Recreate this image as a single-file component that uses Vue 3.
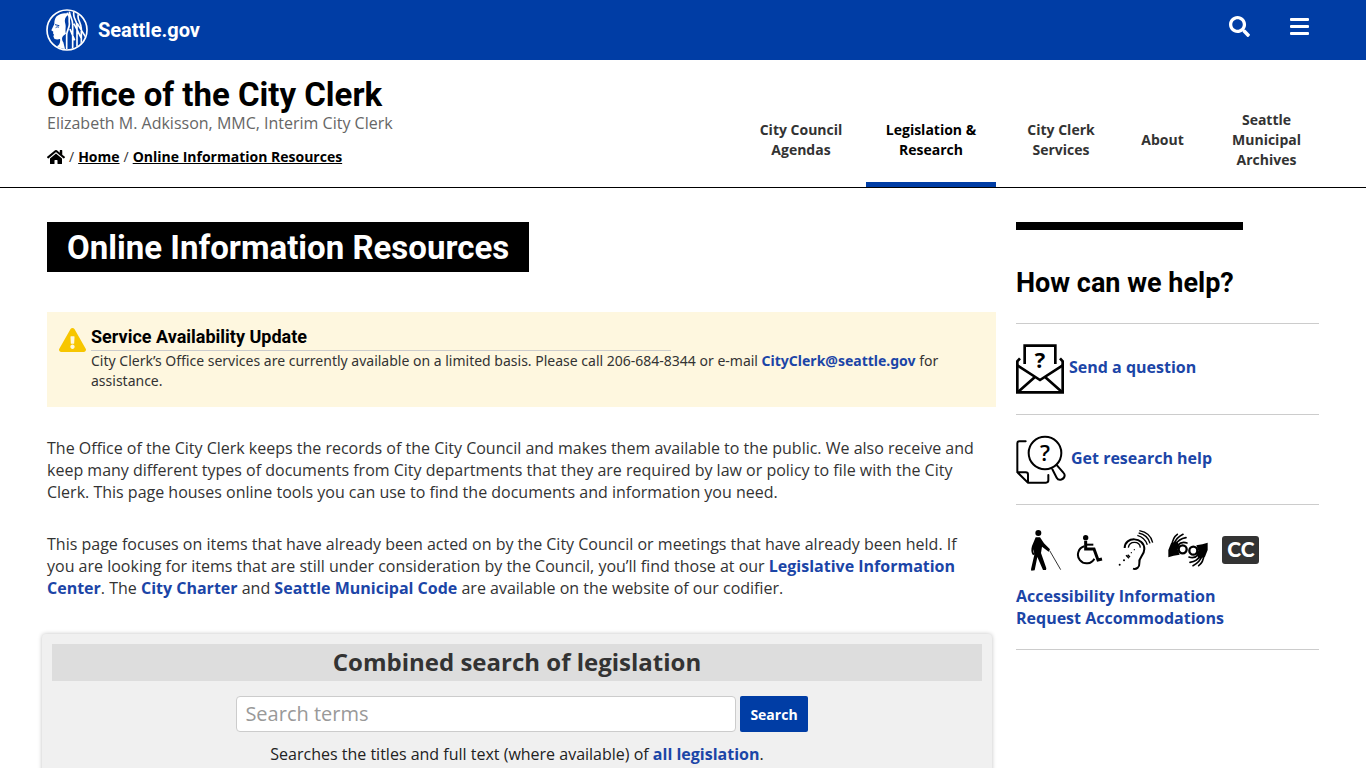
<template>
  <div class="page">
    <header>
      <div class="top-bar">
        <a class="brand" href="#">
          <svg class="brand-logo" viewBox="0 0 126 126" aria-hidden="true">
            <defs>
              <clipPath id="seal"><circle cx="63" cy="63" r="58" /></clipPath>
            </defs>
            <g clip-path="url(#seal)">
              <path fill="#fff" d="M32 22c12-9 26-12 38-6-12 6-16 16-12 28 3 12-2 20 2 30l-8 6c-6 6-4 14 0 20l6 24c-10-2-20-6-26-12 8-4 12-12 10-22-6 2-12 2-17-1l-3-7 2-5-3-4 1-5-6-4 9-19c0-8 1-16 7-23z" />
              <path class="logo-cut" d="M27 47l13 3M29 56c4-3 7-3 10-1" />
              <path class="logo-line" d="M62 12c12 6 6 18 8 30 2 14-8 22-8 36v46M70 8c2 16 10 22 10 38v78M84 8c-6 18 9 26 9 42v70M98 14c-9 14 10 28 8 48v44M84 44l22 44M94 44l26 42M72 60l14 34" />
            </g>
            <circle class="logo-ring" cx="63" cy="63" r="60" />
          </svg>
          <span>Seattle.gov</span>
        </a>
        <div class="top-actions">
          <button type="button" aria-label="Search Seattle.gov">
            <svg width="21" height="21" viewBox="0 0 512 512" fill="currentColor">
              <path d="M505 442.7L405.3 343c-4.5-4.5-10.6-7-17-7H372c27.6-35.3 44-79.7 44-128C416 93.1 322.9 0 208 0S0 93.1 0 208s93.1 208 208 208c48.3 0 92.7-16.4 128-44v16.3c0 6.4 2.5 12.5 7 17l99.7 99.7c9.4 9.4 24.6 9.4 33.9 0l28.3-28.3c9.4-9.4 9.4-24.6.1-34zM208 336c-70.7 0-128-57.2-128-128 0-70.7 57.2-128 128-128 70.7 0 128 57.2 128 128 0 70.7-57.2 128-128 128z" />
            </svg>
          </button>
          <button type="button" aria-label="Open menu">
            <svg width="19" height="19" viewBox="0 0 19 19" fill="currentColor">
              <rect y="1" width="19" height="3" rx="1" />
              <rect y="8" width="19" height="3" rx="1" />
              <rect y="15" width="19" height="3" rx="1" />
            </svg>
          </button>
        </div>
      </div>

      <div class="dept">
        <div class="dept-copy">
          <p class="dept-name">Office of the City Clerk</p>
          <p class="dept-sub">Elizabeth M. Adkisson, MMC, Interim City Clerk</p>
          <nav class="crumbs" aria-label="Breadcrumb">
            <a href="#" aria-label="Seattle.gov home">
              <svg width="18" height="16" viewBox="0 0 576 512" fill="currentColor">
                <path d="M280.37 148.26L96 300.11V464a16 16 0 0 0 16 16l112.06-.29a16 16 0 0 0 15.92-16V368a16 16 0 0 1 16-16h64a16 16 0 0 1 16 16v95.64a16 16 0 0 0 16 16.05L464 480a16 16 0 0 0 16-16V300L295.67 148.26a12.19 12.19 0 0 0-15.3 0zM571.6 251.47L488 182.56V44.05a12 12 0 0 0-12-12h-56a12 12 0 0 0-12 12v72.61L318.47 43a48 48 0 0 0-61 0L4.34 251.47a12 12 0 0 0-1.6 16.9l25.5 31A12 12 0 0 0 45.15 301l235.22-193.74a12.19 12.19 0 0 1 15.3 0L530.9 301a12 12 0 0 0 16.9-1.6l25.5-31a12 12 0 0 0-1.7-16.93z" />
              </svg>
            </a>
            <template v-for="crumb in crumbs" :key="crumb">
              <span>/</span>
              <a href="#">{{ crumb }}</a>
            </template>
          </nav>
        </div>
        <nav class="dept-nav" aria-label="Department">
          <a
            v-for="item in navItems"
            :key="item.label"
            href="#"
            :class="{ active: item.active, short: item.short }"
          >{{ item.label }}</a>
        </nav>
      </div>
    </header>

    <div class="content">
      <main>
        <h1 class="page-title">Online Information Resources</h1>

        <section class="alert">
          <svg class="alert-icon" width="27" height="24" viewBox="0 0 576 512" fill="currentColor" aria-hidden="true">
            <path d="M569.517 440.013C587.975 472.007 564.806 512 527.94 512H48.054c-36.937 0-59.999-40.055-41.577-71.987L246.423 23.985c18.467-32.009 64.72-31.951 83.154 0l239.94 416.028zM288 354c-25.405 0-46 20.595-46 46s20.595 46 46 46 46-20.595 46-46-20.595-46-46-46zm-43.673-165.346l7.418 136c.347 6.364 5.609 11.346 11.982 11.346h48.546c6.373 0 11.635-4.982 11.982-11.346l7.418-136c.375-6.874-5.098-12.654-11.982-12.654h-63.383c-6.884 0-12.356 5.78-11.981 12.654z" />
          </svg>
          <div>
            <h2>Service Availability Update</h2>
            <p>
              City Clerk’s Office services are currently available on a limited basis. Please call 206-684-8344 or e-mail
              <a href="#">CityClerk@seattle.gov</a> for assistance.
            </p>
          </div>
        </section>

        <p class="copy">
          The Office of the City Clerk keeps the records of the City Council and makes them available to the public. We
          also receive and keep many different types of documents from City departments that they are required by law or
          policy to file with the City Clerk. This page houses online tools you can use to find the documents and
          information you need.
        </p>
        <p class="copy">
          This page focuses on items that have already been acted on by the City Council or meetings that have already
          been held. If you are looking for items that are still under consideration by the Council, you’ll find those at
          our <a href="#">Legislative Information Center</a>. The <a href="#">City Charter</a> and
          <a href="#">Seattle Municipal Code</a> are available on the website of our codifier.
        </p>

        <section class="search-panel">
          <h2>Combined search of legislation</h2>
          <form @submit.prevent>
            <input v-model="terms" type="text" placeholder="Search terms" aria-label="Search terms" />
            <button type="submit">Search</button>
          </form>
          <p>Searches the titles and full text (where available) of <a href="#">all legislation</a>.</p>
        </section>
      </main>

      <aside>
        <div class="aside-bar"></div>
        <h2>How can we help?</h2>
        <div class="help-row">
          <a class="help-link" href="#">
            <svg width="48" height="50" viewBox="0 0 144 150" aria-hidden="true">
              <g class="stroke-icon">
                <path d="M26 60V5h92v55" />
                <path d="M12 43L4 52v93h136V52l-8-9" />
                <path d="M4 64l68 44 68-44M6 144l50-44M138 144l-50-44" />
              </g>
              <text x="72" y="71" class="mark heavy">?</text>
            </svg>
            <span>Send a question</span>
          </a>
        </div>
        <div class="help-row">
          <a class="help-link" href="#">
            <svg width="50" height="49" viewBox="0 0 150 147" aria-hidden="true">
              <g class="stroke-icon round">
                <circle cx="87" cy="54" r="49" />
                <path d="M29 19H10q-6 0-6 6v87l32 31h54q7 0 7-7v-16M4 112h25q7 0 7 7v24" />
                <path d="M109 103l13 25c6 11 24 6 24-7 0-4-2-6-4-8l-19-22" />
              </g>
              <text x="87" y="78" class="mark">?</text>
            </svg>
            <span>Get research help</span>
          </a>
        </div>
        <div class="help-row access">
          <div class="access-icons">
            <svg width="32" height="42" viewBox="60 42 96 126" aria-hidden="true">
              <circle cx="85" cy="54" r="9" />
              <path d="M77 67h13l12 18 18 18-4 7-20-15-3 19 16 46-1 5h-9l-17-39-8 40-10 1-1-4 10-44-2-16c-2 8 0 11 3 15l-5 3c-6-8-6-18-3-28z" />
              <path class="thin" d="M119 107l33 57" />
            </svg>
            <svg width="28" height="32" viewBox="200 58 84 96" aria-hidden="true">
              <circle cx="229" cy="69" r="8" />
              <path class="chair" d="M229 78v25h25l12 33 12-3" />
              <path class="chair-arm" d="M230 90h22" />
              <path class="wheel" d="M225 95a26 26 0 1 0 30 37" />
            </svg>
            <svg width="36" height="42" viewBox="316 42 108 126" aria-hidden="true">
              <path class="ear" d="M336 99c0-36 59-34 59 3 0 21-18 23-15 43 1 12-9 19-19 16" />
              <path class="ear-thin" d="M347 98c3-21 34-21 36 0M374 61c15 4 25 14 30 28M378 54c19 4 30 16 34 31M380 47c22 4 36 17 40 36" />
              <circle cx="365" cy="104" r="2" /><circle cx="356" cy="113" r="2" />
              <circle cx="334" cy="136" r="3" /><circle cx="321" cy="149" r="3" />
              <path class="ear-thin" d="M340 121l9 9M345 119l7 7" />
            </svg>
            <svg width="40" height="36" viewBox="21 22 120 108" aria-hidden="true">
              <g v-for="turn in [0, 180]" :key="turn" :transform="`rotate(${turn} 81 76)`">
                <path d="M22 76l8-20 16-6 10 12-6 12 6 16-18 3-16 5z" />
                <path class="finger" d="M33 62c1-14 6-26 16-33M38 60c5-14 15-25 28-31M44 60c6-12 18-19 31-21M50 62c8-9 18-11 28-7" />
                <circle class="pinch" cx="65" cy="74" r="12" />
              </g>
            </svg>
            <svg width="37" height="28" viewBox="0 0 37 28" aria-hidden="true">
              <rect class="cc-box" width="37" height="28" rx="3" />
              <text class="cc-text" x="19" y="21">CC</text>
            </svg>
          </div>
          <a href="#">Accessibility Information</a>
          <a href="#">Request Accommodations</a>
        </div>
      </aside>
    </div>
  </div>
</template>

<script setup>
import { ref } from 'vue'

const terms = ref('')

const crumbs = ['Home', 'Online Information Resources']

const navItems = [
  { label: 'City Council Agendas' },
  { label: 'Legislation & Research', active: true },
  { label: 'City Clerk Services' },
  { label: 'About', short: true },
  { label: 'Seattle Municipal Archives' },
]
</script>

<style>
body {
  margin: 0;
  background: #fff;
}
</style>

<style scoped>
.page {
  --blue: #003da5;
  --link: #1b45a7;
  --display: Roboto, 'Noto Sans', sans-serif;
  font-family: 'Open Sans', 'Noto Sans', sans-serif;
  font-size: 16px;
  line-height: 22px;
  color: #333;
}

h1,
h2,
p {
  margin: 0;
}

a {
  color: var(--link);
  font-weight: 700;
  text-decoration: none;
}

.top-bar {
  display: flex;
  justify-content: space-between;
  align-items: center;
  height: 60px;
  padding: 0 57px 0 46px;
  background: var(--blue);
}

.brand {
  display: flex;
  align-items: center;
  gap: 10px;
  color: #fff;
  font-family: var(--display);
  font-size: 20px;
}

.brand-logo {
  width: 42px;
  height: 42px;
}

.logo-line {
  fill: none;
  stroke: #fff;
  stroke-width: 5;
}

.logo-cut {
  fill: none;
  stroke: var(--blue);
  stroke-width: 3;
}

.logo-ring {
  fill: none;
  stroke: #fff;
  stroke-width: 5;
}

.top-actions {
  display: flex;
  gap: 40px;
  padding-bottom: 8px;
}

.top-actions button {
  display: flex;
  align-items: center;
  padding: 0;
  border: 0;
  background: none;
  color: #fff;
  cursor: pointer;
}

.dept {
  display: flex;
  justify-content: space-between;
  padding: 0 32px 0 47px;
  border-bottom: 1px solid #000;
}

.dept-copy {
  padding: 16px 0 20px;
}

.dept-name {
  padding-top: 1px;
  font-family: var(--display);
  font-size: 33px;
  line-height: 35px;
  font-weight: 700;
  color: #000;
}

.dept-sub {
  color: #666;
}

.crumbs {
  display: flex;
  align-items: center;
  gap: 4px;
  margin-top: 13px;
  font-size: 14px;
  line-height: 20px;
}

.crumbs a {
  color: #000;
  text-decoration: underline;
}

.crumbs svg {
  display: block;
}

.dept-nav {
  display: flex;
  padding-top: 32px;
}

.dept-nav a {
  display: flex;
  align-items: center;
  justify-content: center;
  box-sizing: border-box;
  width: 130px;
  padding: 0 15px;
  border-top: 5px solid transparent;
  border-bottom: 5px solid transparent;
  color: #333;
  font-size: 14px;
  font-weight: 700;
  line-height: 20px;
  text-align: center;
}

.dept-nav a.short {
  width: 73px;
}

.dept-nav a:last-child {
  width: 135px;
}

.dept-nav a.active {
  border-bottom-color: var(--blue);
  color: #000;
}

.content {
  display: grid;
  grid-template-columns: minmax(0, 1fr) 303px;
  gap: 20px;
  padding: 34px 47px 0;
}

.page-title {
  width: fit-content;
  padding: 6px 20px 4px;
  background: #000;
  color: #fff;
  font-family: var(--display);
  font-size: 33px;
  line-height: 40px;
}

.alert {
  display: flex;
  gap: 5px;
  margin: 40px 0 30px;
  padding: 12px 35px 16px 12px;
  background: #fef7df;
  font-family: 'Noto Sans', 'Open Sans', sans-serif;
  font-size: 14px;
  line-height: 20px;
}

.alert-icon {
  flex: none;
  margin-top: 4px;
  color: #f7c600;
}

.alert h2 {
  max-width: 580px;
  border-bottom: 1px solid #ccc;
  font-family: var(--display);
  font-size: 18px;
  line-height: 26px;
  color: #000;
}

.copy {
  margin-bottom: 30px;
  padding-right: 12px;
}

.search-panel {
  margin: 35px 4px 0 -5px;
  padding: 10px;
  border-radius: 4px;
  background: #f0f0f0;
  box-shadow: 0 0 4px rgba(0, 0, 0, 0.25);
  text-align: center;
}

.search-panel h2 {
  padding-bottom: 2px;
  background: #ddd;
  font-size: 24px;
  line-height: 35px;
}

.search-panel form {
  display: flex;
  justify-content: center;
  align-items: center;
  gap: 4px;
  margin: 15px 0 11px;
  padding-left: 10px;
}

.search-panel input {
  box-sizing: border-box;
  width: 500px;
  height: 36px;
  padding: 0 8px 2px;
  border: 1px solid #ccc;
  border-radius: 4px;
  background: #fff;
  color: #333;
  font: 20px 'Open Sans', sans-serif;
}

.search-panel input::placeholder {
  color: #999;
}

.search-panel button {
  height: 36px;
  padding: 0 10px;
  border: 0;
  border-radius: 2px;
  background: var(--blue);
  color: #fff;
  font: 700 14px 'Open Sans', sans-serif;
  cursor: pointer;
}

.search-panel p {
  color: #222;
}

.aside-bar {
  width: 75%;
  height: 8px;
  background: #000;
}

aside h2 {
  padding: 36px 0 22px;
  border-bottom: 1px solid #ccc;
  font-family: var(--display);
  font-size: 27px;
  line-height: 35px;
  color: #000;
}

.help-row {
  padding: 20px 0;
  border-bottom: 1px solid #ccc;
}

.help-link {
  display: flex;
  gap: 5px;
}

.help-link span {
  padding-top: 12px;
}

.stroke-icon {
  fill: none;
  stroke: #000;
  stroke-width: 8;
}

.stroke-icon.round {
  stroke-width: 6;
  stroke-linecap: round;
  stroke-linejoin: round;
}

.mark {
  font: 600 66px 'Open Sans', sans-serif;
  text-anchor: middle;
}

.mark.heavy {
  font-weight: 700;
}

.access {
  display: flex;
  flex-direction: column;
}

.access-icons {
  display: flex;
  align-items: center;
  gap: 14px;
  height: 50px;
  margin-bottom: 10px;
  padding-left: 14px;
}

.thin {
  stroke: #333;
  stroke-width: 3;
}

.chair,
.chair-arm,
.wheel,
.ear,
.ear-thin,
.finger,
.pinch {
  fill: none;
  stroke: #000;
}

.chair {
  stroke-width: 9;
}

.chair-arm,
.wheel,
.ear {
  stroke-width: 6;
}

.ear-thin {
  stroke-width: 4;
}

.finger {
  stroke-width: 5;
  stroke-linecap: round;
}

.pinch {
  stroke-width: 7;
}

.cc-box {
  fill: #333;
}

.cc-text {
  fill: #fff;
  font: 900 21px Lato, sans-serif;
  text-anchor: middle;
}
</style>
